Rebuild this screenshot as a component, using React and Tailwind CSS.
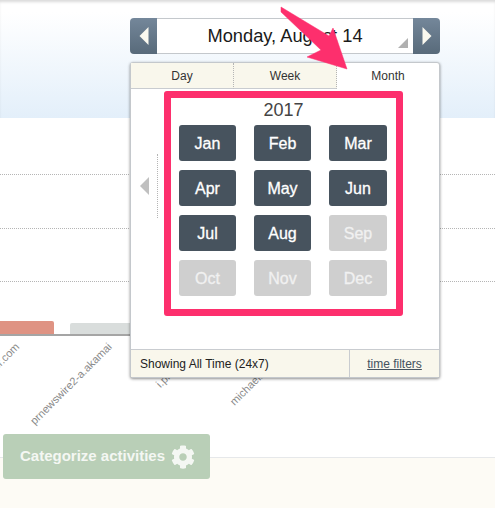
import { FaCog } from "react-icons/fa";

const months = [
  { name: "Jan", on: true },
  { name: "Feb", on: true },
  { name: "Mar", on: true },
  { name: "Apr", on: true },
  { name: "May", on: true },
  { name: "Jun", on: true },
  { name: "Jul", on: true },
  { name: "Aug", on: true },
  { name: "Sep", on: false },
  { name: "Oct", on: false },
  { name: "Nov", on: false },
  { name: "Dec", on: false },
];

function NavButton({ dir }) {
  return (
    <button
      className={`w-[27px] flex items-center justify-center bg-gradient-to-b from-[#74879a] to-[#586a7a] ${
        dir === "left" ? "rounded-l-[4px]" : "rounded-r-[4px]"
      }`}
    >
      <svg width="10" height="18" viewBox="0 0 10 18">
        <path
          d={dir === "left" ? "M9.5 0V18L0.5 9Z" : "M0.5 0V18L9.5 9Z"}
          fill="#fbf9ef"
        />
      </svg>
    </button>
  );
}

function Popover() {
  return (
    <div className="absolute left-[130px] top-[62px] w-[310px] h-[316px] bg-white border border-[#c4c8cc] rounded-[3px] shadow-[0_1px_3px_rgba(0,0,0,0.45)] flex flex-col">
      <div className="flex h-[26px] text-[12px] text-[#333]">
        <div className="w-[103px] flex items-center justify-center bg-[#f9f7ec] border-b border-[#c9ccd0] border-r border-r-[#b5b5b5] [border-right-style:dotted]">
          Day
        </div>
        <div className="w-[103px] flex items-center justify-center bg-[#f9f7ec] border-b border-[#c9ccd0] border-r border-r-[#b5b5b5] [border-right-style:dotted]">
          Week
        </div>
        <div className="flex-1 flex items-center justify-center">Month</div>
      </div>

      <div className="flex-1 flex items-start pt-[2px]">
        <div className="w-[27px] mt-[63px] h-[64px] border-r border-dotted border-[#b5b5b5] flex items-center pl-[9px]">
          <svg width="9" height="18" viewBox="0 0 9 18">
            <path d="M9 0V18L0 9Z" fill="#c0c0c0" />
          </svg>
        </div>
        <div className="ml-[6px] w-[239px] h-[225px] border-[7px] border-[#fd2f6d] rounded-[3px] px-[8px]">
          <div className="h-[27px] text-[18px] leading-[24px] text-center text-[#444]">2017</div>
          <div className="grid grid-cols-[57px_57px_58px] gap-x-[18px] gap-y-[9px]">
            {months.map((m) => (
              <div
                key={m.name}
                className={`h-[36px] pt-[1px] rounded-[3px] flex items-center justify-center text-[16px] font-medium [-webkit-text-stroke:0.3px] ${
                  m.on ? "bg-[#47535e] text-white" : "bg-[#cfcfcf] text-[#f1f1f1]"
                }`}
              >
                {m.name}
              </div>
            ))}
          </div>
        </div>
      </div>

      <div className="flex h-[28px] bg-[#f9f7ec] border-t border-[#c9ccd0] text-[12px]">
        <div className="w-[218px] flex items-center pl-[9px] text-[#222]">Showing All Time (24x7)</div>
        <div className="flex-1 flex items-center justify-center border-l border-[#c9ccd0] text-[#44525f] underline">
          time filters
        </div>
      </div>
    </div>
  );
}

export default function App() {
  return (
    <div className="relative w-[495px] h-[508px] overflow-hidden bg-white font-['Liberation_Sans',sans-serif]">
      {/* header band */}
      <div className="h-[118px] pl-[130px] pt-[18px] bg-gradient-to-b from-white from-10% to-[#e3effa] shadow-[inset_0_3px_3px_-1px_rgba(0,0,0,0.15)]">
        <div className="flex w-[310px] h-[36px]">
          <NavButton dir="left" />
          <div className="relative flex-1 flex items-center justify-center bg-white border-y border-[#c4c8cc] text-[18.3px] text-[#1a1a1a]">
            Monday, August 14
            <span className="absolute right-[5px] bottom-[5px] w-0 h-0 border-l-[10px] border-l-transparent border-b-[10px] border-b-[#b0b0b0]" />
          </div>
          <NavButton dir="right" />
        </div>
      </div>

      {/* chart */}
      <div className="h-[339px] flex flex-col">
        <div className="h-[57px] border-b border-dotted border-[#b5b5b5]" />
        <div className="h-[54px] border-b border-dotted border-[#b5b5b5]" />
        <div className="h-[53px] border-b border-dotted border-[#b5b5b5]" />
        <div className="h-[54px] flex items-end border-b-2 border-[#a5a5a5] w-[140px]">
          <div className="w-[54px] h-[13px] bg-[#df9383] rounded-tr-[2px]" />
          <div className="ml-[16px] w-[70px] h-[11px] bg-[#d9dddc] rounded-tl-[2px]" />
        </div>
        <div className="relative flex-1 text-[11px] text-[#8a8a8a]">
          <span className="absolute right-[483px] top-[3px] origin-top-right -rotate-45 whitespace-nowrap">twitter.com</span>
          <span className="absolute right-[391px] top-[3px] origin-top-right -rotate-45 whitespace-nowrap">prnewswire2-a.akamai</span>
          <span className="absolute right-[299px] top-[0px] origin-top-right -rotate-45 whitespace-nowrap">i.pinimg.com</span>
          <span className="absolute right-[208px] top-[1px] origin-top-right -rotate-45 whitespace-nowrap">michaelhyatt.com</span>
        </div>
      </div>

      {/* footer */}
      <div className="h-[51px] bg-[#fdfbf5] border-t border-[#e6e8ea]" />

      <button className="absolute left-[3px] top-[434px] w-[207px] h-[45px] pl-[2px] rounded-[3px] bg-[#b9cfb7] flex items-center justify-center gap-[6px] text-[15px] font-bold text-[#f4f7f3]">
        Categorize activities
        <FaCog className="w-[24px] h-[24px]" />
      </button>

      <Popover />

      <svg className="absolute left-0 top-0 pointer-events-none" width="495" height="508" viewBox="0 0 495 508">
        <path
          d="M281 7 L329 36 L333 28 L347 69 L307 57 L321 50 L281 12 Z"
          fill="#fd2f6d"
          stroke="#fd2f6d"
          strokeWidth="0.5"
          strokeLinejoin="round"
        />
      </svg>
    </div>
  );
}
